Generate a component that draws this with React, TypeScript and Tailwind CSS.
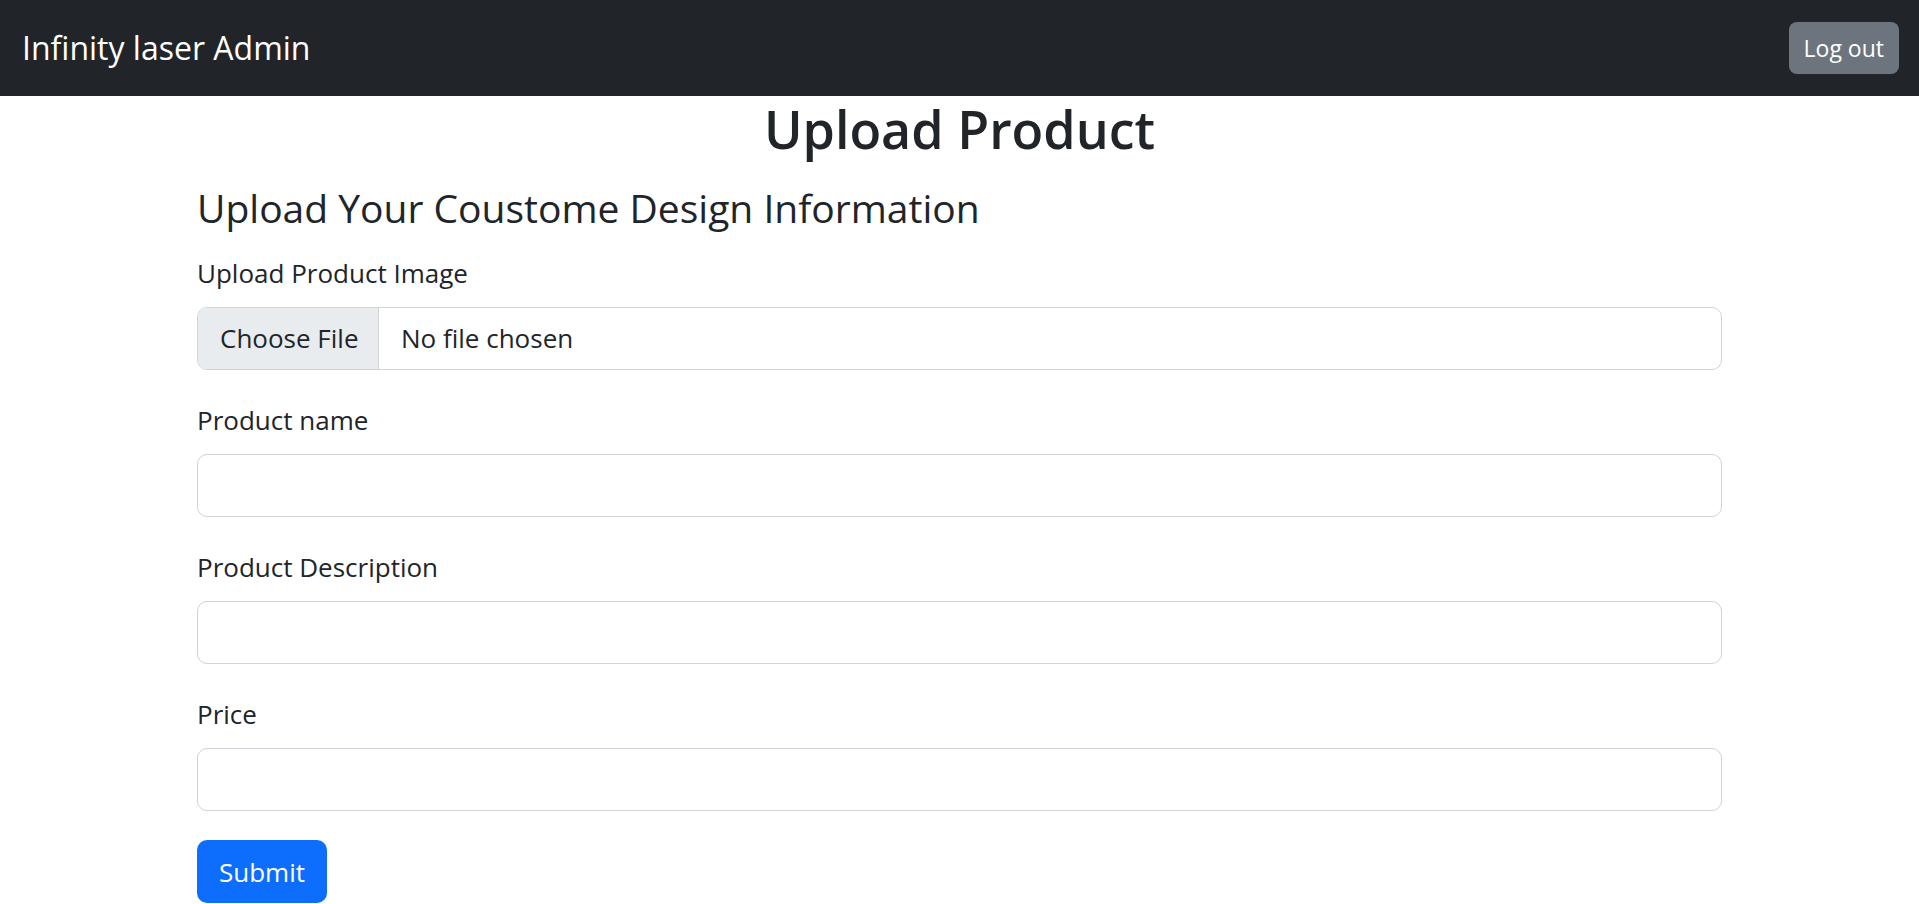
import React from 'react';

const fields = [
  { id: 'name', label: 'Product name' },
  { id: 'description', label: 'Product Description' },
  { id: 'price', label: 'Price' },
];

const App: React.FC = () => {
  return (
    <div className="min-h-screen bg-white text-[#212529] font-['Open_Sans',sans-serif]">
      {/* Navbar */}
      <nav className="h-[96px] bg-[#212529] flex items-center justify-between pl-[22px] pr-[20px]">
        <a href="#" className="text-white text-[32px] leading-none">
          Infinity laser Admin
        </a>
        <button className="h-[52px] px-[15px] rounded-[8px] bg-[#6c757d] text-white text-[23px] leading-none">
          Log out
        </button>
      </nav>

      <main className="w-[1525px] mx-auto">
        <h1 className="mt-[2px] text-center text-[52px] font-semibold leading-[62px]">Upload Product</h1>
        <h4 className="mt-[24px] text-[39px] leading-[47px]">Upload Your Coustome Design Information</h4>

        <form className="mt-[23px]">
          {/* File */}
          <div className="mb-[31px]">
            <label className="block text-[26px] leading-[39px] mb-[14px]">Upload Product Image</label>
            <div className="h-[63px] flex border border-[#ced4da] rounded-[10px] overflow-hidden text-[26px]">
              <div className="w-[181px] shrink-0 bg-[#e9ecef] border-r border-[#ced4da] flex items-center pl-[22px]">
                Choose File
              </div>
              <div className="flex items-center pl-[22px]">No file chosen</div>
            </div>
          </div>

          {fields.map((f) => (
            <div key={f.id} className="mb-[31px]">
              <label htmlFor={f.id} className="block text-[26px] leading-[39px] mb-[14px]">
                {f.label}
              </label>
              <input
                id={f.id}
                type="text"
                className="block w-full h-[63px] border border-[#ced4da] rounded-[10px] px-[20px] text-[26px] outline-none"
              />
            </div>
          ))}

          <button
            type="button"
            className="-mt-[2px] h-[63px] w-[130px] rounded-[10px] bg-[#0d6efd] text-white text-[26px] leading-none"
          >
            Submit
          </button>
        </form>
      </main>
    </div>
  );
};

export default App;
